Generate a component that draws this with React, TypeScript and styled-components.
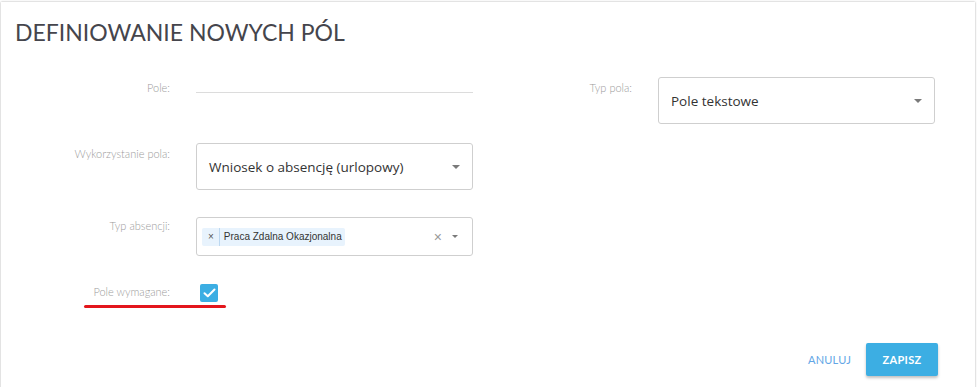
import styled, { createGlobalStyle } from "styled-components";

const GlobalStyle = createGlobalStyle`
html, body {
  margin: 0;
  padding: 0;
  background: #ffffff;
  font-family: Lato, "Noto Sans", sans-serif;
}
* {
  box-sizing: border-box;
}
`;

const Page = styled.div`
  padding: 2px 2px 0 1px;
  height: 387px;
  overflow: hidden;
`;

const Card = styled.div`
  background: #fff;
  height: 420px;
  box-shadow: 0 0 2px rgba(0, 0, 0, 0.35);
  padding: 15px 37px 0 14px;
`;

const Title = styled.h1`
  margin: 0;
  font-family: Lato, sans-serif;
  font-weight: 400;
  font-size: 23px;
  line-height: 30px;
  color: #45454c;
`;

const Form = styled.div`
  display: flex;
  flex-direction: column;
  margin-top: 30px;
`;

const Row = styled.div<{ $height: number }>`
  display: flex;
  height: ${(p) => p.$height}px;
  gap: 4px;
`;

const Field = styled.div`
  position: relative;
  display: grid;
  grid-template-columns: 155px 277px;
  column-gap: 26px;
  align-items: start;
`;

const Label = styled.label<{ $top?: number }>`
  font-family: Lato, sans-serif;
  font-weight: 300;
  font-size: 11px;
  line-height: 14px;
  color: #9c9c9c;
  text-align: right;
  padding-top: ${(p) => p.$top ?? 3}px;
`;

const LineInput = styled.div`
  height: 16px;
  border-bottom: 1px solid #dcdcdc;
`;

const Select = styled.div<{ $height: number }>`
  display: flex;
  align-items: center;
  height: ${(p) => p.$height}px;
  border: 1px solid #cfcfcf;
  border-radius: 3px;
  padding: 0 12px 0 12px;
  font-family: "Open Sans", "Noto Sans", sans-serif;
  font-size: 13.5px;
  color: #333;
`;

const SelectText = styled.span`
  flex: 1;
`;

const Caret = styled.span<{ $size?: number }>`
  width: 0;
  height: 0;
  border-left: ${(p) => p.$size ?? 4}px solid transparent;
  border-right: ${(p) => p.$size ?? 4}px solid transparent;
  border-top: ${(p) => p.$size ?? 4}px solid #7a7a7a;
`;

const Chip = styled.span`
  display: flex;
  align-items: center;
  height: 18px;
  background: #e8f3fd;
  border-radius: 2px;
  font-family: "Liberation Sans", Arial, sans-serif;
  font-size: 10px;
  color: #333;
`;

const ChipRemove = styled.span`
  padding: 0 5px 0 6px;
  font-size: 10px;
  color: #555;
  border-right: 1px solid #bcd8f1;
  line-height: 18px;
`;

const ChipText = styled.span`
  padding: 0 3px 0 4px;
`;

const Multi = styled(Select)`
  padding: 0 14px 0 5px;
`;

const Spacer = styled.span`
  flex: 1;
`;

const Clear = styled.span`
  font-family: "Liberation Sans", Arial, sans-serif;
  font-size: 14px;
  color: #999;
  margin-right: 10px;
`;

const Checkbox = styled.span`
  margin: 1px 0 0 4px;
  width: 18px;
  height: 18px;
  border-radius: 2px;
  background: #3caee3;
  display: flex;
  align-items: center;
  justify-content: center;
`;

const Underline = styled.span`
  position: absolute;
  left: 69px;
  top: 22px;
  width: 142px;
  height: 3px;
  border-radius: 2px;
  background: #e3161c;
`;

const Footer = styled.div`
  display: flex;
  justify-content: flex-end;
  align-items: center;
  gap: 15px;
  margin-top: 41px;
`;

const LinkButton = styled.button`
  background: none;
  border: none;
  padding: 0;
  font-family: Lato, sans-serif;
  font-weight: 400;
  font-size: 11px;
  color: #62a6e6;
  letter-spacing: 0.2px;
`;

const PrimaryButton = styled.button`
  width: 72px;
  height: 33px;
  border: none;
  border-radius: 2px;
  background: #3caee3;
  color: #fff;
  font-family: Lato, sans-serif;
  font-weight: 700;
  font-size: 11px;
  letter-spacing: 0.3px;
  box-shadow: 0 2px 3px rgba(0, 0, 0, 0.25);
`;

export default function App() {
  return (
    <>
      <GlobalStyle />
      <Page>
        <Card>
          <Title>DEFINIOWANIE NOWYCH PÓL</Title>
          <Form>
            <Row $height={66}>
              <Field>
                <Label $top={4}>Pole:</Label>
                <LineInput />
              </Field>
              <Field>
                <Label $top={4}>Typ pola:</Label>
                <Select $height={47}>
                  <SelectText>Pole tekstowe</SelectText>
                  <Caret />
                </Select>
              </Field>
            </Row>
            <Row $height={74}>
              <Field>
                <Label $top={4}>Wykorzystanie pola:</Label>
                <Select $height={47}>
                  <SelectText>Wniosek o absencję (urlopowy)</SelectText>
                  <Caret />
                </Select>
              </Field>
            </Row>
            <Row $height={66}>
              <Field>
                <Label $top={2}>Typ absencji:</Label>
                <Multi $height={39}>
                  <Chip>
                    <ChipRemove>×</ChipRemove>
                    <ChipText>Praca Zdalna Okazjonalna</ChipText>
                  </Chip>
                  <Spacer />
                  <Clear>×</Clear>
                  <Caret $size={3} />
                </Multi>
              </Field>
            </Row>
            <Field>
              <Label $top={2}>Pole wymagane:</Label>
              <Checkbox>
                <svg width="13" height="10" viewBox="0 0 13 10">
                  <path d="M1.5 5.2 L4.8 8.3 L11.5 1.5" fill="none" stroke="#fff" strokeWidth="2" strokeLinecap="round" strokeLinejoin="round" />
                </svg>
              </Checkbox>
              <Underline />
            </Field>
            <Footer>
              <LinkButton>ANULUJ</LinkButton>
              <PrimaryButton>ZAPISZ</PrimaryButton>
            </Footer>
          </Form>
        </Card>
      </Page>
    </>
  );
}
